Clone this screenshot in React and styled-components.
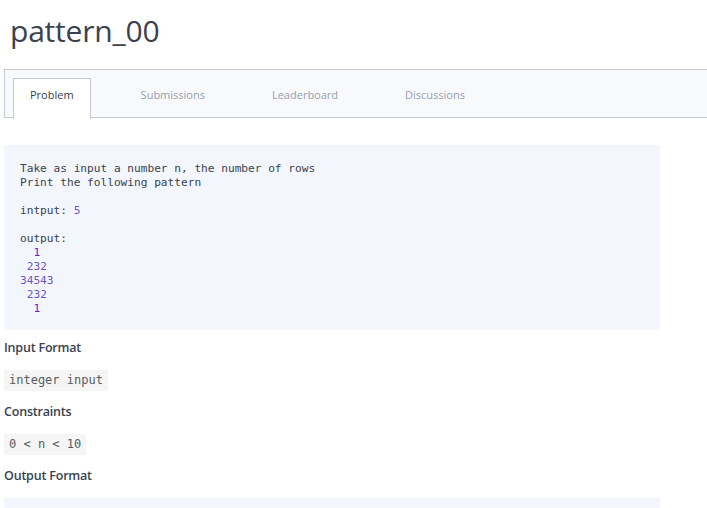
import React from "react"
import styled, { createGlobalStyle } from "styled-components"

const GlobalStyle = createGlobalStyle`
  html, body {
    margin: 0;
    padding: 0;
    background: #ffffff;
  }
  body {
    font-family: "Open Sans", "Liberation Sans", sans-serif;
    color: #39424e;
  }
`

const tabs = ["Problem", "Submissions", "Leaderboard", "Discussions"]

const statement = `Take as input a number n, the number of rows
Print the following pattern

intput: `

const App = () => {
  return (
    <>
      <GlobalStyle />
      <Page>
        <Title>pattern_00</Title>
        <TabBar>
          {tabs.map((tab, i) => (
            <Tab key={tab} active={i === 0}>
              {tab}
            </Tab>
          ))}
        </TabBar>

        <CodeBlock>
          {statement}
          <Num>5</Num>
          {"\n\noutput:\n  "}
          <Num dark>1</Num>
          {"\n "}
          <Num>232</Num>
          {"\n"}
          <Num>34543</Num>
          {"\n "}
          <Num>232</Num>
          {"\n  "}
          <Num dark>1</Num>
        </CodeBlock>

        <Heading>Input Format</Heading>
        <Para>
          <InlineCode>integer input</InlineCode>
        </Para>

        <Heading>Constraints</Heading>
        <Para>
          <InlineCode>0 &lt; n &lt; 10</InlineCode>
        </Para>

        <Heading>Output Format</Heading>
        <CodeBlock short />
      </Page>
    </>
  )
}

export default App

const Page = styled.div`
  padding: 0 0 0 4px;
  overflow: hidden;
  height: 508px;
`

const Title = styled.h1`
  margin: 0;
  padding: 12px 0 0 6px;
  height: 57px;
  box-sizing: border-box;
  font-size: 30px;
  line-height: 38px;
  font-weight: 400;
  color: #39424e;
  letter-spacing: -0.2px;
`

const TabBar = styled.div`
  display: flex;
  gap: 33px;
  margin-top: 12px;
  padding: 8px 0 0 8px;
  height: 49px;
  box-sizing: border-box;
  background: #f8f9fa;
  border: 1px solid #c6cad3;
  border-right: none;
`

const Tab = styled.div`
  display: flex;
  align-items: flex-start;
  height: 41px;
  padding: 8px 16px 0;
  margin-bottom: -1px;
  box-sizing: border-box;
  font-size: 11px;
  line-height: 16px;
  color: ${({ active }) => (active ? "#39424e" : "#979faf")};
  background: ${({ active }) => (active ? "#ffffff" : "transparent")};
  border: 1px solid ${({ active }) => (active ? "#c6cad3" : "transparent")};
  border-bottom: none;
`

const CodeBlock = styled.pre`
  margin: ${({ short }) => (short ? "13px 0 0" : "27px 0 0")};
  width: 656px;
  height: ${({ short }) => (short ? "40px" : "auto")};
  box-sizing: border-box;
  padding: 17px 16px 14px;
  background: #f3f7fd;
  font-family: "DejaVu Sans Mono", "Liberation Mono", monospace;
  font-size: 11.15px;
  line-height: 14px;
  color: #39424e;
  white-space: pre;
`

const Num = styled.span`
  color: ${({ dark }) => (dark ? "#6a1bd1" : "#6b55c9")};
`

const Heading = styled.h3`
  margin: 9px 0 0;
  font-size: 12.5px;
  line-height: 18px;
  font-weight: 600;
  color: #39424e;
  letter-spacing: -0.2px;
`

const Para = styled.div`
  display: flex;
  margin: 13px 0 12px;
  height: 21px;
`

const InlineCode = styled.code`
  display: block;
  height: 21px;
  padding: 0 5px;
  box-sizing: border-box;
  background: #f5f5f5;
  border-radius: 2px;
  font-family: "DejaVu Sans Mono", "Liberation Mono", monospace;
  font-size: 12px;
  line-height: 21px;
  color: #555b63;
`
